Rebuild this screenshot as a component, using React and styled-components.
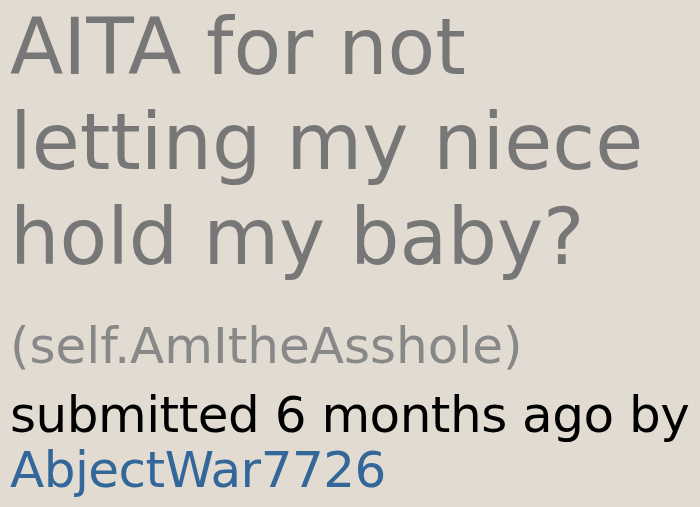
import styled, { createGlobalStyle } from "styled-components";

const GlobalStyle = createGlobalStyle`
  html, body {
    margin: 0;
    padding: 0;
    background: #e1dbd2;
  }
  body {
    font-family: "DejaVu Sans", Verdana, sans-serif;
  }
`;

const Page = styled.div`
  width: 700px;
  height: 507px;
  box-sizing: border-box;
  padding: 0 0 0 10px;
  background: #e1dbd2;
  overflow: hidden;
`;

const Title = styled.h1`
  margin: 0;
  font-weight: normal;
  font-size: 78px;
  line-height: 95px;
  color: #777;
`;

const Domain = styled.div`
  margin-top: 36px;
  font-size: 50px;
  line-height: 50px;
  color: #888;
`;

const Tagline = styled.div`
  margin-top: 17px;
  font-size: 50px;
  line-height: 55px;
  letter-spacing: -0.5px;
  color: #000;
`;

const Author = styled.a`
  color: #369;
  text-decoration: none;
`;

export default function App() {
  return (
    <Page>
      <GlobalStyle />
      <Title>AITA for not letting my niece hold my baby?</Title>
      <Domain>(self.AmItheAsshole)</Domain>
      <Tagline>
        submitted 6 months ago by <Author href="#">AbjectWar7726</Author>
      </Tagline>
    </Page>
  );
}
